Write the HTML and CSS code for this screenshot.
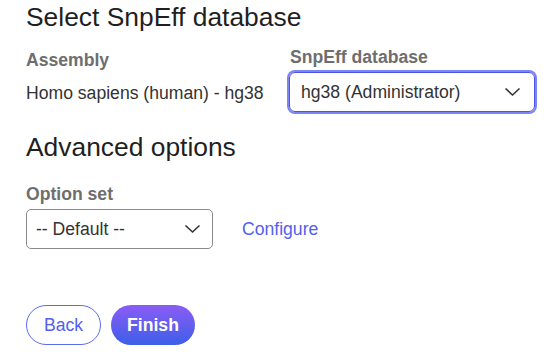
FILE: index.html
```html
<!DOCTYPE html>
<html lang="en">

<head>
    <meta charset="utf-8">
    <meta name="viewport" content="width=device-width, initial-scale=1.0">
    <title>SnpEff</title>
    <link rel="stylesheet" href="styles.css">
</head>

<body>
    <main class="wizard">
        <h1>Select SnpEff database</h1>

        <section class="felter">
            <div class="felt venstre">
                <label>Assembly</label>
                <p class="vaerdi">Homo sapiens (human) - hg38</p>
            </div>
            <div class="felt">
                <label>SnpEff database</label>
                <div class="vaelg aktiv">
                    <span>hg38 (Administrator)</span>
                    <svg width="17" height="10" viewBox="0 0 17 10">
                        <path d="M1.5 1.5 L8.5 8 L15.5 1.5" fill="none" stroke="#333" stroke-width="1.6" />
                    </svg>
                </div>
            </div>
        </section>

        <h2>Advanced options</h2>

        <div class="felt">
            <label>Option set</label>
            <div class="raekke">
                <div class="vaelg lille">
                    <span>-- Default --</span>
                    <svg width="17" height="10" viewBox="0 0 17 10">
                        <path d="M1.5 1.5 L8.5 8 L15.5 1.5" fill="none" stroke="#333" stroke-width="1.6" />
                    </svg>
                </div>
                <a href="#" class="link">Configure</a>
            </div>
        </div>

        <nav class="knapper">
            <button class="tilbage">Back</button>
            <button class="faerdig">Finish</button>
        </nav>
    </main>
</body>

</html>
```

FILE: styles.css
```css
body {
    margin: 0;
    font-family: "Liberation Sans", Arial, sans-serif;
    color: #222;
    background-color: white;
}

.wizard {
    padding: 2px 26px 0 26px;
}

h1,
h2 {
    font-size: 26.4px;
    font-weight: normal;
    margin: 0;
    color: #1f1f1f;
}

h2 {
    margin-top: 20px;
}

.felter {
    display: grid;
    grid-template-columns: 264px 246px;
    margin-top: 14px;
}

.felt label {
    display: block;
    font-size: 17.6px;
    font-weight: bold;
    color: #6e6e6e;
    margin-bottom: 4px;
}

.venstre {
    padding-top: 3px;
}

.vaerdi {
    margin: 0;
    padding-top: 8px;
    font-size: 17.6px;
    color: #333;
}

h2 + .felt {
    margin-top: 21px;
}

.vaelg {
    display: flex;
    justify-content: space-between;
    align-items: center;
    box-sizing: border-box;
    height: 40px;
    padding: 0 11px 0 9px;
    border: 1px solid #8a8a8a;
    border-radius: 5px;
    font-size: 17.6px;
    color: #333;
}

.vaelg.aktiv {
    width: 246px;
    margin-left: -1px;
    border: 1px solid #4b54e0;
    box-shadow: 0 0 0 2px #7d84f6;
    border-radius: 6px;
    padding: 0 13px 0 11px;
}

.vaelg.lille {
    width: 187px;
}

.raekke {
    display: flex;
    align-items: center;
    gap: 29px;
}

.link {
    color: #5360ee;
    text-decoration: none;
    font-size: 17.6px;
}

.knapper {
    display: flex;
    gap: 10px;
    margin-top: 56px;
}

button {
    font-family: "Liberation Sans", Arial, sans-serif;
    font-size: 17.6px;
    height: 40px;
    border-radius: 20px;
    cursor: pointer;
}

.tilbage {
    width: 75px;
    background-color: white;
    color: #5360ee;
    border: 1px solid #5a6bee;
}

.faerdig {
    width: 84px;
    border: none;
    color: white;
    font-weight: bold;
    background: linear-gradient(to bottom, #8b5cf5, #3d5fe8);
}
```
